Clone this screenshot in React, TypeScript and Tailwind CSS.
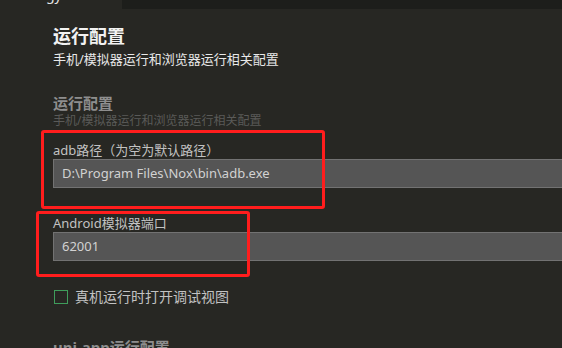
import React from 'react';

const font = { fontFamily: '"Noto Sans", "Noto Sans CJK SC", sans-serif' };

function Field({ label, value, className }: { label: string; value: string; className?: string }) {
  return (
    <div className={className}>
      <div className="text-[13px] leading-[18px] text-[#c2c2c2]">{label}</div>
      <div className="h-[29px] w-[560px] border border-[#727272] bg-[#555555] pl-[8px] text-[13px] leading-[27px] text-[#d2d2d2]">
        {value}
      </div>
    </div>
  );
}

export default function App() {
  return (
    <div className="relative h-[348px] w-[562px] overflow-hidden bg-[#272723]" style={font}>
      {/* tab strip */}
      <div className="flex h-[9px]">
        <div className="w-[122px] overflow-hidden">
          <div className="-mt-[13px] pl-[46px] text-[14px] leading-[16px] text-[#e6e6e6]">gy</div>
        </div>
        <div className="flex-1 bg-[#1d1e1b]" />
      </div>

      <div className="flex">
        <div className="ml-[13px] mt-[5px] h-[400px] w-px bg-[#3a3a36]" />
        <div className="flex flex-col pl-[40px] pt-[15px]">
          <div className="text-[18px] font-bold leading-[24px] text-[#f2f2f2]">运行配置</div>
          <div className="mt-[2px] text-[13px] leading-[18px] text-[#e8e8e8]">手机/模拟器运行和浏览器运行相关配置</div>

          <div className="mt-[25px] text-[15px] font-bold leading-[20px] text-[#8e8e8e]">运行配置</div>
          <div className="text-[12px] leading-[16px] text-[#5a5a58]">手机/模拟器运行和浏览器运行相关配置</div>

          <Field className="mt-[12px]" label="adb路径（为空为默认路径）" value="D:\Program Files\Nox\bin\adb.exe" />
          <Field className="mt-[26px]" label="Android模拟器端口" value="62001" />

          <label className="mt-[27px] flex h-[18px] items-center gap-[7px]">
            <span className="ml-px h-[14px] w-[14px] border border-[#3f9d5b]" />
            <span className="text-[14px] leading-[18px] text-[#c2c2c2]">真机运行时打开调试视图</span>
          </label>

          <div className="mt-[31px] text-[15px] font-bold leading-[20px] text-[#8e8e8e]">uni-app运行配置</div>
        </div>
      </div>

      {/* annotation boxes */}
      <div className="absolute left-[41px] top-[130px] h-[79px] w-[284px] rounded-[3px] border-[3px] border-[#ff1d1d]" />
      <div className="absolute left-[36px] top-[211px] h-[66px] w-[214px] rounded-[3px] border-[3px] border-[#ff1d1d]" />
    </div>
  );
}
